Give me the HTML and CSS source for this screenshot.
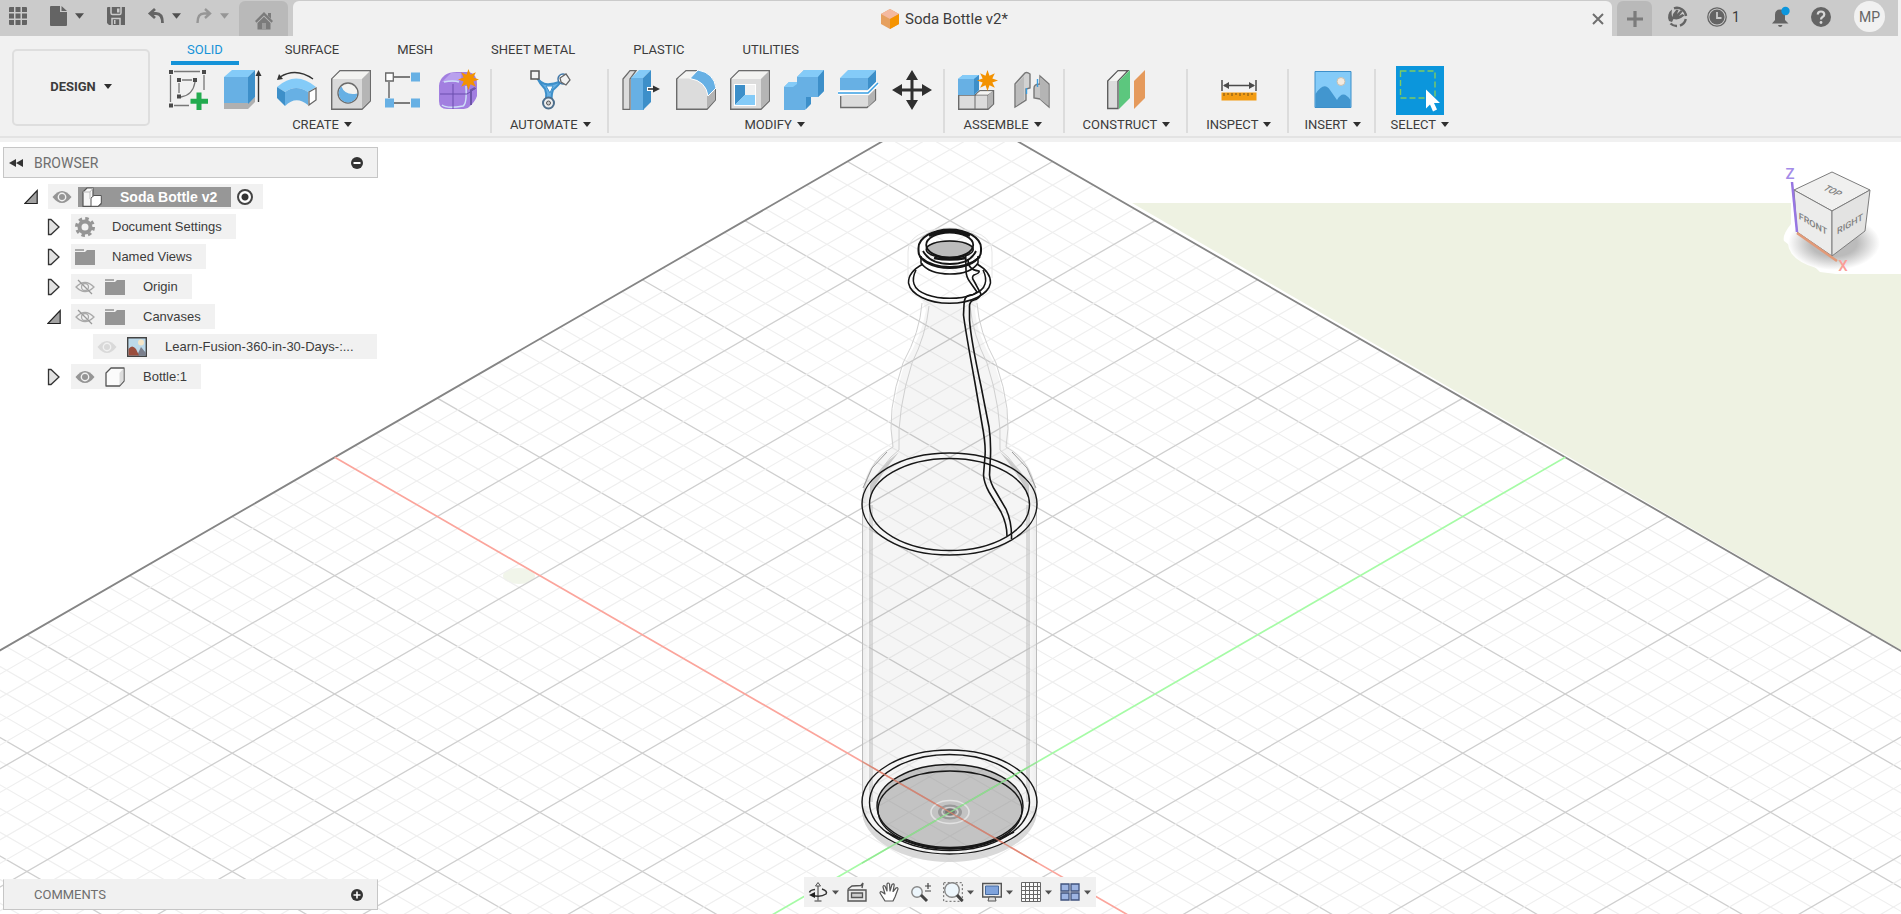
FILE: index.html
```html
<!DOCTYPE html>
<html lang="en">
<head>
<meta charset="utf-8">
<title>Soda Bottle v2*</title>
<link rel="stylesheet" href="styles.css">
</head>
<body>
<svg class="defs" aria-hidden="true">
  <defs>
    <symbol id="caret" viewBox="0 0 10 8"><path d="M0 1H10L5 7Z" fill="currentColor"/></symbol>
    <symbol id="star" viewBox="-10 -10 20 20"><path d="M10 0L4.6 1.9L7 7L1.9 4.6L0 10L-1.9 4.6L-7 7L-4.6 1.9L-10 0L-4.6-1.9L-7-7L-1.9-4.6L0-10L1.9-4.6L7-7L4.6-1.9Z" fill="#f39200"/></symbol>
    <symbol id="eye" viewBox="0 0 20 20"><path d="M.5 10Q10-2 19.500 10Q10 22 .5 10Z" fill="currentColor"/><circle cx="10" cy="10" r="3.700" fill="none" stroke="#f1f1f1" stroke-width="1.400"/></symbol>
    <symbol id="eye-off" viewBox="0 0 20 20"><path d="M1 10Q10 1 19 10Q10 19 1 10Z" fill="none" stroke="#aaa" stroke-width="1.3"/><circle cx="10" cy="10" r="3.5" fill="none" stroke="#aaa" stroke-width="1.3"/><path d="M3 3L17 17" stroke="#999" stroke-width="1.3"/></symbol>
    <symbol id="folder" viewBox="0 0 20 20"><path d="M0 2H9V4H0Z" fill="#aaa"/><path d="M0 5H10L12 3H20V18H0Z" fill="#959595"/></symbol>
    <symbol id="closed" viewBox="0 0 14 18"><path d="M1.5 1.5H4L12 9L4 16.5H1.5Z" fill="#e2e2e2" stroke="#333" stroke-width="1.3"/></symbol>
    <symbol id="open" viewBox="0 0 14 18"><path d="M.8 15.5H13.2V2.5Z" fill="#a2a2a2" stroke="#222" stroke-width="1.2"/></symbol>
    <linearGradient id="sheen" x1="0" x2="1"><stop offset="0" stop-color="#000" stop-opacity=".13"/><stop offset=".05" stop-color="#000" stop-opacity=".04"/><stop offset=".95" stop-color="#000" stop-opacity=".04"/><stop offset="1" stop-color="#000" stop-opacity=".13"/></linearGradient>
    <radialGradient id="soft"><stop offset=".5" stop-color="#bbb"/><stop offset="1" stop-color="#fff"/></radialGradient>
  </defs>
</svg>

<div class="app">
  <header class="titlebar">
    <div class="quick">
      <button class="tool" aria-label="Data panel"><svg width="18" height="18" viewBox="0 0 18 18" fill="#646464"><path d="M0 1Q0 0 1 0H5V5H0ZM6.500 0H11.500V5H6.500ZM13 0H17Q18 0 18 1V5H13ZM0 6.500H5V11.500H0ZM6.500 6.500H11.500V11.500H6.500ZM13 6.500H18V11.500H13ZM0 13H5V18H1Q0 18 0 17ZM6.500 13H11.500V18H6.500ZM13 13H18V17Q18 18 17 18H13Z"/></svg></button>
      <button class="tool tool-menu" aria-label="File"><svg width="17" height="20" viewBox="0 0 17 20" fill="#646464"><path d="M0 1Q0 0 1 0H10V6H17V19Q17 20 16 20H1Q0 20 0 19ZM11.500 0L17 5H11.500Z"/></svg><svg class="caret"><use href="#caret"/></svg></button>
      <button class="tool" aria-label="Save"><svg width="18" height="18" viewBox="0 0 18 18"><path d="M0 1Q0 0 1 0H18V18H2L0 16Z" fill="#646464"/><path d="M4 0V6Q4 7.500 5.500 7.500H12.500Q14 7.500 14 6V0M5 18V11.500H13V18" fill="none" stroke="#cbcbcb" stroke-width="1.500"/><path d="M10 1.500H12.500V5.500H10ZM7 13H8.500V17H7Z" fill="#cbcbcb"/></svg></button>
      <button class="tool tool-menu" aria-label="Undo"><svg width="16" height="16" viewBox="0 0 16 16" fill="none" stroke="#646464" stroke-width="2.800"><path d="M7 1L2 5.500L7 10M2.500 5.500H8Q14.500 5.500 14.500 15"/></svg><svg class="caret"><use href="#caret"/></svg></button>
      <button class="tool tool-menu faded" aria-label="Redo"><svg width="16" height="16" viewBox="0 0 16 16" fill="none" stroke="#969696" stroke-width="2.400"><path d="M9 1L14 5.500L9 10M13.500 5.500H8Q1.500 5.500 1.500 15"/></svg><svg class="caret"><use href="#caret"/></svg></button>
    </div>
    <button class="home-tab" aria-label="Home"><svg width="20" height="18" viewBox="0 0 20 18"><path d="M10 0L19 9L17.500 10.800L10 3.500L2.500 10.800L1 9Z M14 1H17V6.500L14 3.800Z M3.500 11L10 4.700L16.500 11V17.500H3.500Z" fill="#7b7b7b"/><path d="M8 11H12V17.500H8Z" fill="#9c9c9c"/></svg></button>
    <div class="doc-tab">
      <h1 class="doc-title"><svg width="18" height="20" viewBox="0 0 18 20"><path d="M9 0L18 5V15L9 20L0 15V5Z" fill="#e6a05f"/><path d="M9 0L18 5L9 10L0 5Z" fill="#f4b9a0"/><path d="M9 10L18 5V15L9 20Z" fill="#f59300"/></svg>Soda Bottle v2*</h1>
      <button class="close" aria-label="Close"><svg width="12" height="12" viewBox="0 0 12 12"><path d="M1 1L11 11M11 1L1 11" stroke="#6f6f6f" stroke-width="2"/></svg></button>
    </div>
    <button class="new-tab" aria-label="New design"><svg width="16" height="16" viewBox="0 0 16 16"><path d="M8 0V16M0 8H16" stroke="#7b7b7b" stroke-width="3.200"/></svg></button>
    <div class="account">
      <button class="tool" aria-label="Extensions"><svg width="20" height="20" viewBox="0 0 20 20"><path d="M5 2.500A9 9 0 0 0 2 14L5 15L6.500 12A9 9 0 0 0 14 11L17.500 8.500L15.500 7L12 9L15.500 4.500L14 3L10 7L11.500 3L9.500 2.500L6 7L5.500 10Q4 8 5 2.500Z" fill="#646464"/><path d="M7 1.300A9.200 9.200 0 0 1 19 9M18.800 12A9.200 9.200 0 0 1 13 18.600M10 19A9.200 9.200 0 0 1 3.500 16.500" fill="none" stroke="#646464" stroke-width="2.400"/></svg></button>
      <button class="tool jobs" aria-label="Job status, 1"><svg width="20" height="20" viewBox="0 0 20 20"><circle cx="10" cy="10" r="9.200" fill="none" stroke="#646464" stroke-width="1.300"/><circle cx="10" cy="10" r="7.600" fill="#646464"/><path d="M10 5V11H14.500" fill="none" stroke="#cbcbcb" stroke-width="1.800"/></svg><span>1</span></button>
      <button class="tool" aria-label="Notifications"><svg width="20" height="22" viewBox="0 0 20 22"><path d="M1 17.500L4 14V9Q4 3.500 9 3.500Q14 3.500 14 9V14L17.500 17.500ZM7 19H11.500Q11 21 9.200 21Q7.500 21 7 19Z" fill="#646464"/><circle cx="14.500" cy="5" r="4.200" fill="#0c96dd"/></svg></button>
      <button class="tool" aria-label="Help"><svg width="20" height="20" viewBox="0 0 20 20"><circle cx="10" cy="10" r="10" fill="#646464"/><path d="M6.800 7.500Q6.800 4.500 10 4.500T13.300 7.500Q13.300 9 11.500 10Q10 10.800 10 12.500" fill="none" stroke="#d8d8d8" stroke-width="2.200"/><circle cx="10" cy="15.500" r="1.400" fill="#d8d8d8"/></svg></button>
      <button class="avatar">MP</button>
    </div>
  </header>

  <section class="ribbon">
    <button class="workspace">DESIGN<svg class="caret small"><use href="#caret"/></svg></button>
    <div class="ribbon-main">
      <nav class="tabs">
        <a class="tab active" href="#solid">SOLID</a>
        <a class="tab" href="#surface">SURFACE</a>
        <a class="tab" href="#mesh">MESH</a>
        <a class="tab" href="#sheet">SHEET METAL</a>
        <a class="tab" href="#plastic">PLASTIC</a>
        <a class="tab" href="#utilities">UTILITIES</a>
      </nav>
      <div class="groups">
        <div class="group multi">
          <div class="icons">
            <button aria-label="Create sketch"><svg viewBox="0 0 40 40"><path d="M5 1.500H31M1.500 5V32M5 35.500H20M35 5V20M13 10H23M10 13V23M26 12Q24 25 12 27" fill="none" stroke="#777" stroke-width="1.300"/><path d="M0 0H4V4H0ZM33 0H37V4H33ZM0 33.500H4V37.500H0ZM8 8H12V12H8ZM24 8H28V12H24ZM8 24.500H12V28.500H8Z" fill="#4a4a4a"/><path d="M30 22.500V40M21.500 31.200H39" stroke="#22ab4f" stroke-width="5"/></svg></button>
            <button aria-label="Extrude"><svg viewBox="0 0 40 40"><path d="M1 33H25L32 27V32L25 39H1Z" fill="#b0b0b0"/><path d="M1 7H25V33H1Z" fill="#67b0e4"/><path d="M1 7L9 0H32L25 7Z" fill="#84cbf8"/><path d="M25 7L32 0V27L25 34Z" fill="#3d8fc9"/><path d="M35.500 4V32" stroke="#333" stroke-width="1.400"/><path d="M32.500 6L35.500 0L38.500 6Z" fill="#333"/></svg></button>
            <button aria-label="Revolve"><svg viewBox="0 0 40 40"><path d="M36 9Q19-3 3 7" fill="none" stroke="#333" stroke-width="1.400"/><path d="M0 10L2 4L6 9Z" fill="#333"/><path d="M0 17Q19 0 39 17L31 22Q19 14 8 22Z" fill="#84cbf8"/><path d="M8 22Q19 14 31 22V35Q19 25 8 36Z" fill="#67b0e4"/><path d="M0 17L8 22V36L0 28Z" fill="#3d8fc9"/><path d="M32 22L39 18V30L32 35Z" fill="#fff" stroke="#666" stroke-width="1.300"/></svg></button>
            <button aria-label="Hole"><svg viewBox="0 0 40 40"><path d="M.7 9L9 .7H39.300V31L31 39.300H.7Z" fill="#d9d9d9" stroke="#6b6b6b" stroke-width="1.400"/><path d="M1.400 9L9 1.400H38.600L31 9Z" fill="#f3f3f1"/><path d="M31 9L38.600 1.400V31L31 38.600Z" fill="#b5b5b5"/><circle cx="17" cy="23" r="10" fill="#f2f2f0" stroke="#6b6b6b" stroke-width="1.400"/><path d="M10.500 16.500Q14 26 26.300 23.500A9.300 9.300 0 1 1 10.500 16.500Z" fill="#67b0e4"/></svg></button>
            <button aria-label="Pattern"><svg viewBox="0 0 40 40"><path d="M9 7H25M4 12V28M9 33H25" stroke="#555" stroke-width="1.300"/><path d="M.7 3H8.300V11H.7Z" fill="#fff" stroke="#666" stroke-width="1.300"/><path d="M26 2.500H35V11.500H26ZM0 28.500H9V37.500H0ZM26 28.500H35V37.500H26Z" fill="#67b0e4"/></svg></button>
            <button aria-label="Create form"><svg viewBox="0 0 40 40"><path d="M0 16Q0 10 6 5Q10 2 18 2H30Q38 4 38 14V26Q36 32 30 37Q28 39 22 39H8Q0 39 0 31Z" fill="#a27fe0"/><path d="M3 12Q8 7 12 3H22Q24 8 19 12Z" fill="#b9a0ee"/><path d="M3 35Q8 39 24 36Q28 34 27 16M5 12Q14 10 20 12" fill="none" stroke="#cfe0f8" stroke-width="1.500"/><path d="M1 24H28L37 18M14 14V39" stroke="#6a4fae" stroke-width="1" fill="none"/><path d="M32 35V20L36 18" fill="none" stroke="#6d55a8" stroke-width="2"/><use href="#star" x="19" y="-1" width="21" height="21"/></svg></button>
          </div>
          <button class="menu">CREATE<svg class="caret small"><use href="#caret"/></svg></button>
        </div>
        <div class="group wide">
          <div class="icons">
            <button aria-label="Automated modeling"><svg viewBox="0 0 40 40"><path d="M6 6Q12 16 20 14Q28 14 34 8Q28 16 23 20Q21 26 22 30H16Q17 24 15 19Q10 14 6 6Z" fill="#67b0e4" stroke="#3d8fc9" stroke-width="2"/><path d="M16 16H23L20 23Z" fill="#fff" stroke="#3d8fc9"/><path d="M1 1H9V9H1Z" fill="#f2f2f2" stroke="#555" stroke-width="1.500"/><circle cx="33" cy="9" r="5" fill="#fff" stroke="#4278a8" stroke-width="1.500"/><path d="M30 8L36 4L40 10L36 15L31 12Z" fill="#f2f2f2" stroke="#666" stroke-width="1.300"/><circle cx="18.500" cy="33" r="5.500" fill="#eee" stroke="#4e6f8c" stroke-width="2"/><circle cx="18.500" cy="33" r="2" fill="#ccc" stroke="#555"/></svg></button>
          </div>
          <button class="menu">AUTOMATE<svg class="caret small"><use href="#caret"/></svg></button>
        </div>
        <div class="group multi">
          <div class="icons">
            <button aria-label="Press pull"><svg viewBox="0 0 40 40"><path d="M8 39.300H1V9L8 .7H14L8 9Z" fill="#dcdcdc" stroke="#6b6b6b" stroke-width="1.300"/><path d="M9 8H22V40H9Z" fill="#67b0e4"/><path d="M9 8L17 0H29L21 8Z" fill="#84cbf8"/><path d="M21 8L29 0V32L21 40Z" fill="#3d8fc9"/><path d="M25 19H33" stroke="#fff" stroke-width="4"/><path d="M26 19H33" stroke="#333" stroke-width="1.600"/><path d="M31 15.500L38 19L31 22.500Z" fill="#333"/></svg></button>
            <button aria-label="Fillet"><svg viewBox="0 0 40 40"><path d="M.7 9L10 .7H20Q39 4 39.300 20V30L31 39.300H.7Z" fill="#dcdcdc" stroke="#6b6b6b" stroke-width="1.400"/><path d="M2 8.500L10 1.500H21L14 8.500Z" fill="#f4f4f2"/><path d="M31 26L39 20V30L31 38.500Z" fill="#b3b3b3"/><path d="M14 8.500L22 0Q38 3 40 18L32 26Q30 11 14 8.500Z" fill="#67b0e4" stroke="#fff"/></svg></button>
            <button aria-label="Shell"><svg viewBox="0 0 40 40"><path d="M.7 9L9 .7H39.300V31L31 39.300H.7Z" fill="#dcdcdc" stroke="#6b6b6b" stroke-width="1.400"/><path d="M1.400 9L9 1.400H38.600L31 9Z" fill="#f3f3f1"/><path d="M31 9L38.600 1.400V31L31 38.600Z" fill="#b5b5b5"/><path d="M4 14H26V36H4Z" fill="#fff"/><path d="M5 15H15V25L5 35Z" fill="#3d8fc9"/><path d="M5 35L15 25H25V35Z" fill="#84cbf8"/><path d="M15 15H25V25H15Z" fill="#f1f1f1"/></svg></button>
            <button aria-label="Combine"><svg viewBox="0 0 40 40"><path d="M0 17L5 12H13V7L20 0H40V21L34 27H27V33L21 40H0Z" fill="#67b0e4"/><path d="M13 7L20 0H40L34 7ZM0 17L5 12H13V14L9 17Z" fill="#84cbf8"/><path d="M34 7L40 0V21L34 27ZM22 27H27V34L22 39Z" fill="#3d8fc9"/></svg></button>
            <button aria-label="Split body"><svg viewBox="0 0 40 40"><path d="M2.700 26V37.500H29L37.500 30V19" fill="#dcdcdc" stroke="#6b6b6b" stroke-width="1.300"/><path d="M30 26L37 19V30L30 37Z" fill="#b3b3b3"/><path d="M2 8H30V20H2Z" fill="#67b0e4"/><path d="M2 8L10 0H38L30 8Z" fill="#84cbf8"/><path d="M30 8L38 0V12L30 20Z" fill="#3d8fc9"/><path d="M0 23H30L40 13" fill="none" stroke="#fff" stroke-width="4"/><path d="M0 23H30L40 13" fill="none" stroke="#3aa0e4" stroke-width="1.500"/></svg></button>
            <button aria-label="Move"><svg viewBox="0 0 40 40"><path d="M20 6V34M6 20H34" stroke="#2f2f2f" stroke-width="3"/><path d="M14 10L20 0L26 10ZM14 30L20 40L26 30ZM10 14L0 20L10 26ZM30 14L40 20L30 26Z" fill="#2f2f2f"/></svg></button>
          </div>
          <button class="menu">MODIFY<svg class="caret small"><use href="#caret"/></svg></button>
        </div>
        <div class="group multi">
          <div class="icons">
            <button aria-label="New component"><svg viewBox="0 0 40 40"><path d="M.7 25H17L22 20.700H35.500V34L30 39.300H.7Z" fill="#dcdcdc" stroke="#6b6b6b" stroke-width="1.400"/><path d="M17 25V39M17 25H30L35 21M30 25V39" fill="none" stroke="#6b6b6b"/><path d="M18 24.500L22 21.300H34.500L30 24.500Z" fill="#f4f4f2"/><path d="M30 25L35 21V34L30 38.500Z" fill="#b3b3b3"/><path d="M0 9L5 5H21V20L16 25H0Z" fill="#67b0e4"/><path d="M0 9L5 5H21L16 9Z" fill="#84cbf8"/><path d="M16 9L21 5V20L16 25Z" fill="#3d8fc9"/><use href="#star" x="19" y="0" width="21" height="21"/></svg></button>
            <button aria-label="Joint"><svg viewBox="0 0 40 40"><path d="M3 14L12 4Q14 1 18 4V18L14 19V30L3 37Z" fill="#d2d2d2" stroke="#777" stroke-width="1.400"/><path d="M12 6V30L4 36V15Z" fill="#bcbcbc"/><path d="M37 14L28 6V14Q22 14 22 18V28L28 29L37 37Z" fill="#c6c6c6" stroke="#777" stroke-width="1.400"/><path d="M28 7L36.500 15V36L28 29Z" fill="#b4b4b4"/><path d="M14.500 18V24M25.500 9V17" stroke="#3a9de0" stroke-width="1.400"/></svg></button>
          </div>
          <button class="menu">ASSEMBLE<svg class="caret small"><use href="#caret"/></svg></button>
        </div>
        <div class="group wide">
          <div class="icons">
            <button aria-label="Offset plane"><svg viewBox="0 0 40 40"><path d="M1.700 11L12 .7H22L12 11V38.500H1.700Z" fill="#dcdcdc" stroke="#5f5f5f" stroke-width="1.400"/><path d="M3 11L12 1.500H20L11 11Z" fill="#f4f4f2"/><path d="M13 11L24 0V28L13 39Z" fill="#5cc77e"/><path d="M28 11L39 0V28L28 39Z" fill="#e59a5c"/></svg></button>
          </div>
          <button class="menu">CONSTRUCT<svg class="caret small"><use href="#caret"/></svg></button>
        </div>
        <div class="group wide">
          <div class="icons">
            <button aria-label="Measure"><svg viewBox="0 0 40 40"><path d="M3 10V21M37 10V21M5 15.500H35" stroke="#4a4a4a" stroke-width="1.500"/><path d="M4 15.500L10 12V19ZM36 15.500L30 12V19Z" fill="#4a4a4a"/><path d="M2.500 22.500H37.500V30.500H2.500Z" fill="#f39c12"/><path d="M5 23V26M9 23V25M13 23V26M17 23V25M21 23V26M25 23V25M29 23V26M33 23V25" stroke="#70501a"/></svg></button>
          </div>
          <button class="menu">INSPECT<svg class="caret small"><use href="#caret"/></svg></button>
        </div>
        <div class="group">
          <div class="icons">
            <button aria-label="Insert canvas"><svg viewBox="0 0 40 40"><path d="M2 1.500H38V37.500H2Z" fill="#84cbf8" stroke="#3d8fc9"/><path d="M2.500 24Q11 11 17 20L24 30Q30 19 37.500 30V37H2.500Z" fill="#4296cf"/><circle cx="28" cy="11.500" r="4" fill="#f3eadf" stroke="#c9bfae"/></svg></button>
          </div>
          <button class="menu">INSERT<svg class="caret small"><use href="#caret"/></svg></button>
        </div>
        <div class="group last">
          <div class="icons">
            <button class="selected" aria-label="Select"><svg viewBox="0 0 48 48"><path d="M4.500 4.500H39V31.500H4.500Z" fill="none" stroke="#7ecb62" stroke-width="1.400" stroke-dasharray="6 3"/><path d="M30 23V42L34 38L37 45L41 43L38 36.500H44Z" fill="#fff"/></svg></button>
          </div>
          <button class="menu">SELECT<svg class="caret small"><use href="#caret"/></svg></button>
        </div>
      </div>
    </div>
  </section>

  <main class="viewport">
    <svg class="scene" viewBox="0 142 1901 772" preserveAspectRatio="xMidYMid slice" role="img" aria-label="Soda bottle model on the ground grid">
      <defs>
        <path id="line" d="M950 102.300L2180.600 812.300"/>
        <g id="four"><use href="#line" x="-20.510" y="11.834"/><use href="#line" x="-41.020" y="23.668"/><use href="#line" x="-61.530" y="35.502"/><use href="#line" x="-82.040" y="47.336"/></g>
        <g id="family">
          <g stroke="#efefef" stroke-width="1.200"><use href="#four"/><use href="#four" x="-102.550" y="59.170"/><use href="#four" x="-205.100" y="118.340"/><use href="#four" x="-307.650" y="177.510"/><use href="#four" x="-410.200" y="236.680"/><use href="#four" x="-512.750" y="295.850"/><use href="#four" x="-615.300" y="355.020"/><use href="#four" x="-717.850" y="414.190"/><use href="#four" x="-820.400" y="473.360"/><use href="#four" x="-922.950" y="532.530"/><use href="#four" x="-1025.500" y="591.700"/><use href="#four" x="-1128.050" y="650.870"/></g>
          <g stroke="#cfcfcf" stroke-width="1.300"><use href="#line" x="-102.550" y="59.170"/><use href="#line" x="-205.100" y="118.340"/><use href="#line" x="-307.650" y="177.510"/><use href="#line" x="-410.200" y="236.680"/><use href="#line" x="-512.750" y="295.850"/><use href="#line" x="-717.850" y="414.190"/><use href="#line" x="-820.400" y="473.360"/><use href="#line" x="-922.950" y="532.530"/><use href="#line" x="-1025.500" y="591.700"/><use href="#line" x="-1128.050" y="650.870"/></g>
        </g>
        <clipPath id="body"><path d="M862 503V810A87.500 52 0 0 0 1037 810V503Z"/></clipPath>
      </defs>
      <path d="M1132 203H1901V650Z" fill="#eef2e2"/>
      <ellipse cx="519" cy="576" rx="16" ry="8" fill="#f1f5ea"/>
      <use href="#family"/>
      <use href="#family" transform="matrix(-1 0 0 1 1900 0)"/>
      <path d="M-280.600 812.300L950 102.300L2180.600 812.300" fill="none" stroke="#858585" stroke-width="1.800"/>
      <path d="M1565.300 457.300L334.700 1167.300" stroke="#a6fba6" stroke-width="1.700"/>
      <path d="M334.700 457.300L1565.300 1167.300" stroke="#fba59c" stroke-width="1.700"/>

      <path d="M922 300L926 310Q922 335 905 363Q888 415 892 447Q863 462 862 503V810A87.500 52 0 0 0 1037 810V503Q1036 462 1008 447Q1012 415 994 363Q977 335 975 310L978 300Z" fill="url(#sheen)"/>
      <g clip-path="url(#body)"><path d="M862 803A87.500 52 0 0 0 1037 803V870H862Z" fill="#d2d2d2" opacity=".8"/><path d="M866 500V806M1033 500V806" stroke="#fff" stroke-width="6" opacity=".45"/></g>
      <g fill="none" stroke="#bcbcbc">
        <path d="M862.500 503V803M870 505V802M872 505V802M1029 505V802M1027 505V802M1036.500 503V803"/>
        <path d="M922 303Q920 332 903 363Q886 412 893 447Q865 462 862.500 503M977 303Q979 332 996 363Q1013 412 1006 447Q1035 462 1036.500 503M929 306Q926 335 912 363Q897 410 899 450Q882 462 872 490M970 306Q973 335 987 363Q1002 410 1000 450Q1017 462 1027 490" stroke="#d0d0d0"/>
        <path d="M887 452L872 468L863 488M1012 452L1027 468L1036 488" stroke="#9a9a9a"/>
        <path d="M908 252Q908 230 949 228Q992 230 992 252V278M908 252V278" stroke="#e6e6e6"/>
      </g>
      <path d="M870 485Q878 468 899 452Q880 475 870 495ZM1029 485Q1021 468 1000 452Q1019 475 1029 495Z" fill="#c9c9c9"/>

      <g fill="none" stroke="#171717" stroke-width="1.400">
        <ellipse cx="949.500" cy="504" rx="87.500" ry="51"/>
        <ellipse cx="949.500" cy="504.500" rx="80" ry="46"/>
        <ellipse cx="950" cy="806" rx="73" ry="41.500" fill="#888" fill-opacity=".45" stroke="none"/>
        <ellipse cx="949.500" cy="802" rx="87.500" ry="52"/>
        <ellipse cx="949.500" cy="802.500" rx="80" ry="48"/>
        <ellipse cx="950" cy="806" rx="73" ry="41.500"/>
        <ellipse cx="950" cy="810" rx="72" ry="39"/>
        <path d="M886 832Q949 865 1014 832" stroke-width="1.800"/>
      </g>
      <ellipse cx="950" cy="812" rx="19" ry="11.500" fill="none" stroke="#e2e2e2" stroke-width="1.600"/>
      <ellipse cx="950" cy="812" rx="12" ry="7.500" fill="#9a9a9a"/>
      <ellipse cx="950" cy="812" rx="8" ry="4.500" fill="none" stroke="#d0d0d0" stroke-width="1.600"/>
      <ellipse cx="950" cy="812" rx="5" ry="3.500" fill="#777"/>
      <path d="M862 863.100L1037 762.100" stroke="#8fe58f" stroke-width="1.400" opacity=".8"/>
      <path d="M862 761.500L1037 862.500" stroke="#d9826c" stroke-width="1.400" opacity=".8"/>

      <g fill="none" stroke="#151515" stroke-width="1.500">
        <ellipse cx="950" cy="249" rx="24" ry="9" fill="#bcbcbc" stroke="none"/>
        <path d="M918.500 248A31.200 18.500 0 0 1 981 248V251A31.200 17 0 0 1 918.500 251Z" stroke-width="2"/>
        <ellipse cx="949.700" cy="245" rx="23.500" ry="12.500" stroke-width="1.800"/>
        <ellipse cx="949.700" cy="249.500" rx="23.500" ry="8.500"/>
        <path d="M929 235.500Q950 227 970 235.500" stroke-width="3"/>
        <path d="M923 251Q930 264 950 264T976 251M920 257Q932 267 950 267T980 257" stroke-width="1.800"/>
        <path d="M934 258Q950 261 966 258" stroke-width="2.500"/>
        <path d="M921 256V263Q929 274 950 274T978 263V256"/>
        <path d="M923 264Q908 272 908.500 283A41.200 22.500 0 0 0 990.500 283Q991 272 977 264"/>
        <path d="M916 270Q912 278 914 284C920 303 980 303 985 284Q987 278 983 270"/>
        <path d="M965.700 256L966 270Q966 277 970 282L977 292Q974 295 970 295Q964 296 964 305L963.500 315Q965 328 975 383L982 424Q986 445 985 456L983.500 475Q984 483 989 492L1001 512Q1007 524 1007 536" stroke-width="1.600"/>
        <path d="M968 260Q968 270 979 271Q980 273 974 275Q971 277 974 281L981 294Q979 299 974 300Q969 301 969.500 308V320Q971 340 981 386L989 427Q991 440 990.500 456L989.500 475Q990 483 996 492L1006 509Q1012 522 1011.500 539" stroke-width="1.600"/>
      </g>

      <path d="M1791 202H1901V274H1836L1820 272L1802 255L1784 241Q1782 235 1791 224Z" fill="#fff"/>
      <ellipse cx="1834" cy="243" rx="46" ry="27" fill="url(#soft)"/>
      <g stroke="#7d7d7d" stroke-linejoin="round">
        <path d="M1832 172L1870 190L1832 211L1794 190Z" fill="#f0f0ef"/>
        <path d="M1794 190L1832 211V256L1797 232Z" fill="#ececeb"/>
        <path d="M1832 211L1870 190L1865 231L1832 256Z" fill="#e3e3e2"/>
      </g>
      <path d="M1792 182L1797 232" stroke="#9776e2" stroke-width="2.500"/>
      <path d="M1797 233L1837 261" stroke="#e29a78" stroke-width="2.500"/>
      <g class="cube-text" text-anchor="middle">
        <text class="face" transform="translate(1813 227) skewY(30)">FRONT</text>
        <text class="face" transform="translate(1850 227) skewY(-30)">RIGHT</text>
        <text class="face" transform="translate(1830 193) rotate(26) skewX(-28)">TOP</text>
        <text class="axis" x="1790" y="179" fill="#a48be8">Z</text>
        <text class="axis" x="1843" y="271" fill="#fb9d97">X</text>
      </g>
    </svg>

    <aside class="browser">
      <div class="panel-head"><svg width="14" height="8" viewBox="0 0 14 8"><path d="M7 0V8L0 4ZM14 0V8L7 4Z" fill="#333"/></svg><h2>BROWSER</h2><button aria-label="Collapse browser"><svg width="12" height="12" viewBox="0 0 12 12"><circle cx="6" cy="6" r="6" fill="#333"/><path d="M2.500 6H9.500" stroke="#fff" stroke-width="2"/></svg></button></div>
      <ul class="tree">
        <li class="level0"><button class="twist" aria-label="Collapse"><svg><use href="#open"/></svg></button>
          <div class="node root"><svg class="dim"><use href="#eye"/></svg><span class="picked"><svg viewBox="0 0 20 20"><path d="M1 5L5 1H11V9H15L19 11V17L16 19.300H1Z" fill="#f6f6f6" stroke="#555" stroke-width="1.200"/><path d="M9 11L12 8.500H19.300V16L16 19.300H9Z" fill="#fff" stroke="#555"/><path d="M1 5H8V12M8 5L11 1" fill="none" stroke="#bbb"/></svg><b>Soda Bottle v2</b></span><input type="radio" checked aria-label="Activate Soda Bottle v2"></div></li>
        <li class="level1"><button class="twist" aria-label="Expand"><svg><use href="#closed"/></svg></button>
          <div class="node"><svg viewBox="0 0 20 20"><circle cx="10" cy="10" r="8.500" fill="none" stroke="#959595" stroke-width="3" stroke-dasharray="3.500 3.175"/><circle cx="10" cy="10" r="5.500" fill="none" stroke="#959595" stroke-width="4"/></svg><span class="name">Document Settings</span></div></li>
        <li class="level1"><button class="twist" aria-label="Expand"><svg><use href="#closed"/></svg></button>
          <div class="node"><svg><use href="#folder"/></svg><span class="name">Named Views</span></div></li>
        <li class="level1"><button class="twist" aria-label="Expand"><svg><use href="#closed"/></svg></button>
          <div class="node"><svg><use href="#eye-off"/></svg><svg><use href="#folder"/></svg><span class="name">Origin</span></div></li>
        <li class="level1"><button class="twist" aria-label="Collapse"><svg><use href="#open"/></svg></button>
          <div class="node"><svg><use href="#eye-off"/></svg><svg><use href="#folder"/></svg><span class="name">Canvases</span></div></li>
        <li class="level2">
          <div class="node"><svg class="pale"><use href="#eye"/></svg><svg viewBox="0 0 20 20"><path d="M.7.7H19.300V19.300H.7Z" fill="#bcd9ea" stroke="#444" stroke-width="1.400"/><circle cx="14" cy="5.500" r="3" fill="#f5e6c8"/><path d="M10 18.500L14 10L19 16V18.500Z" fill="#7b7f8c"/><path d="M1.500 12Q5 7 9 12L12 18.500H1.500Z" fill="#9a4e3e"/></svg><span class="name">Learn-Fusion-360-in-30-Days-:...</span></div></li>
        <li class="level1"><button class="twist" aria-label="Expand"><svg><use href="#closed"/></svg></button>
          <div class="node"><svg class="dim"><use href="#eye"/></svg><svg viewBox="0 0 20 20"><path d="M1 6L6 1H19V14L14.500 19H1Z" fill="#fbfbfb" stroke="#555" stroke-width="1.300" stroke-linejoin="round"/><path d="M14.500 6L18.500 1.500V14L14.500 18.500Z" fill="#ddd"/></svg><span class="name">Bottle:1</span></div></li>
      </ul>
    </aside>

    <div class="bottom">
      <div class="comments"><h2>COMMENTS</h2><button aria-label="Add comment"><svg width="12" height="12" viewBox="0 0 12 12"><circle cx="6" cy="6" r="6" fill="#333"/><path d="M2.500 6H9.500M6 2.500V9.500" stroke="#fff" stroke-width="1.600"/></svg></button></div>
      <nav class="navbar" aria-label="Navigation">
        <button class="drop" aria-label="Orbit"><svg viewBox="0 0 20 20"><path d="M10 1V19M6.500 19H13.500" stroke="#777" stroke-width="1.500"/><path d="M7.500 4L10 .5L12.500 4Z" fill="#eee" stroke="#555"/><path d="M14 7Q20 9 18 12Q12 16 4 13M7 7.500Q2 8 1.500 10.500" fill="none" stroke="#333" stroke-width="1.500"/><path d="M1 13L7 10V16Z" fill="#222"/></svg><svg class="caret"><use href="#caret"/></svg></button>
        <button aria-label="Look at"><svg viewBox="0 0 20 20"><path d="M1 8H19V19H1Z" fill="#e8e8e8" stroke="#555" stroke-width="1.400"/><path d="M4.500 11H15.500V15.500H4.500Z" fill="#ccc" stroke="#555" stroke-width="1.300"/><path d="M1 7L5 4L14 3.500L16 1L15 6" fill="none" stroke="#555" stroke-width="1.400"/></svg></button>
        <button aria-label="Pan"><svg viewBox="0 0 20 20"><path d="M6 19L1 11Q1 9 3 10L6 12L4 5Q4 3 6 4L8 9L8 2Q9 0 10.500 2L11 9L13 2.500Q15 1 15.200 3L14 9.500L17 6Q19 5 19 7L16 15L14 19Z" fill="#fff" stroke="#555" stroke-width="1.200" stroke-linejoin="round"/></svg></button>
        <button aria-label="Zoom"><svg viewBox="0 0 20 20"><circle cx="6" cy="10" r="5.200" fill="#edf6fc" stroke="#888" stroke-width="1.400"/><path d="M10 13L16 19" stroke="#444" stroke-width="3"/><path d="M17 1V7M14 4H20M14 9H20" stroke="#444" stroke-width="1.200"/></svg></button>
        <button class="drop" aria-label="Fit"><svg viewBox="0 0 20 20"><path d="M.7.7H19.300V19.300H.7Z" fill="none" stroke="#666" stroke-dasharray="2 2"/><circle cx="9" cy="8" r="7.300" fill="#edf6fc" stroke="#888" stroke-width="1.400"/><path d="M14 13L19.500 19" stroke="#444" stroke-width="3.200"/></svg><svg class="caret"><use href="#caret"/></svg></button>
        <button class="drop" aria-label="Display settings"><svg viewBox="0 0 20 20"><path d="M.7 1.500H19.300V15H.7Z" fill="#eee" stroke="#555" stroke-width="1.400"/><path d="M3.500 4H16.500V12.500H3.500Z" fill="#7fa3dc" stroke="#476a9e"/><path d="M7 15H13L14 19H6Z" fill="#ddd" stroke="#555"/></svg><svg class="caret"><use href="#caret"/></svg></button>
        <button class="drop" aria-label="Grid and snaps"><svg viewBox="0 0 20 20"><path d="M.5.5H19.500V19.500H.5ZM4.500 0V20M8.500 0V20M12.500 0V20M16.500 0V20M0 4.500H20M0 8.500H20M0 12.500H20M0 16.500H20" fill="#fafafa" stroke="#666"/></svg><svg class="caret"><use href="#caret"/></svg></button>
        <button class="drop" aria-label="Viewports"><svg viewBox="0 0 20 20"><path d="M1 2H9V9H1ZM11 2H19V9H11ZM1 11H9V18H1ZM11 11H19V18H11Z" fill="#9db4e2" stroke="#40537d" stroke-width="1.300"/></svg><svg class="caret"><use href="#caret"/></svg></button>
      </nav>
    </div>
  </main>
</div>
</body>
</html>
```
FILE: styles.css
```css
* { box-sizing: border-box; }
body { margin: 0; font-family: Roboto, "Liberation Sans", sans-serif; font-size: 13px; color: #3c3c3c; }
button { font: inherit; color: inherit; background: none; border: 0; padding: 0; display: flex; align-items: center; }
svg { display: block; flex: none; overflow: visible; }
h1, h2 { margin: 0; font-weight: 400; }
ul { list-style: none; margin: 0; padding: 0; }
.defs { position: absolute; width: 0; height: 0; }
.caret { width: 9px; height: 8px; color: #505050; }
.caret.small { width: 8px; height: 7px; color: #2f2f2f; }

.app { display: flex; flex-direction: column; min-height: 100vh; background: #f1f1f1; }

.titlebar { display: flex; height: 36px; margin-right: 3px; padding-top: 1px; background: #cbcbcb; }
.quick { display: flex; align-items: center; width: 239px; padding: 0 0 6px 9px; gap: 23px; }
.tool-menu { gap: 8px; }
.faded .caret { color: #969696; }
.quick .tool-menu + .tool-menu { margin-left: -8px; }
.home-tab, .new-tab { justify-content: center; background: #b9b9b9; border-radius: 6px 6px 0 0; }
.home-tab { width: 49px; margin-right: 5px; padding-top: 4px; }
.new-tab { width: 35px; margin-left: 5px; }
.doc-tab { flex: 1; display: flex; align-items: center; padding: 0 8px 0 4px; background: #f1f1f1; border-radius: 6px 6px 0 0; }
.doc-title { flex: 1; display: flex; justify-content: center; align-items: center; gap: 6px; font-size: 15px; }
.account { display: flex; align-items: center; width: 246px; padding: 0 13px 4px 15px; }
.account .tool { margin-right: 20px; }
.account .jobs { gap: 5px; margin-right: 31px; font-size: 14px; }
.avatar { justify-content: center; width: 31px; height: 31px; margin-left: auto; border-radius: 50%; background: #f1f1f1; font-size: 14px; color: #666; }

.ribbon { display: flex; padding-left: 12px; border-bottom: 4px solid #f1f1f1; box-shadow: inset 0 -2px #e3e3e3; }
.workspace { justify-content: center; gap: 8px; width: 138px; height: 77px; margin: 13px 6px 12px 0; padding-bottom: 2px; border: 2px solid #dedede; border-radius: 5px; font-weight: 700; }
.ribbon-main { flex: 1; }
.tabs { display: flex; gap: 26px; height: 30px; padding-left: 15px; }
.tab { padding: 5px 16px 0; line-height: 18px; color: inherit; text-decoration: none; height: 29px; border-bottom: 4px solid transparent; }
.tab.active { margin-right: 4px; color: #1593d8; border-color: #1593d8; }
.groups { display: flex; }
.group { display: flex; flex-direction: column; align-items: center; height: 72px; padding: 0 15px; background: linear-gradient(#dcdcdc, #dcdcdc) no-repeat right 3px / 2px 64px; }
.group.multi { padding: 0 13px; }
.group.wide { padding: 0 18px; }
.group.last { background: none; }
.menu { gap: 5px; height: 19px; }
.multi .menu { margin-right: 4px; }
.icons { display: flex; align-items: center; gap: 14px; height: 49px; }
.icons svg { width: 40px; height: 42px; padding-bottom: 2px; }
.icons .selected { background: #0b96dc; }
.icons .selected svg { width: 48px; height: 49px; padding: 0; }

.viewport { flex: 1; position: relative; display: flex; flex-direction: column; justify-content: space-between; background: #fff; }
.scene { position: absolute; inset: 0; width: 100%; height: 100%; overflow: hidden; }
.cube-text { font-weight: 500; }
.face { font-size: 9px; fill: #808080; }
.axis { font-size: 15px; }

.browser { position: relative; width: 375px; margin: 5px 0 0 3px; }
.panel-head, .comments { display: flex; align-items: center; width: 375px; height: 31px; background: #f1f1f1; border: 1px solid #c6c6c6; color: #6e6e6e; }
.panel-head { padding: 0 14px 0 5px; gap: 11px; }
.panel-head h2 { flex: 1; font-size: 14px; }
.tree { display: flex; flex-direction: column; gap: 5px; margin-top: 6px; font: 13px "Liberation Sans", sans-serif; }
.tree li { display: flex; align-items: center; height: 25px; }
.tree svg { width: 20px; height: 20px; }
.tree .twist svg { width: 14px; height: 18px; }
.level0 { padding-left: 21px; }
.level0 .twist { margin-right: 10px; }
.level1 { padding-left: 44px; }
.level1 .twist { margin-right: 10px; }
.level2 { padding-left: 90px; }
.node { display: flex; align-items: center; height: 25px; padding: 0 14px 0 4px; gap: 10px; background: #f1f1f1; }
.level2 .node { min-width: 284px; }
.node .name { padding-left: 7px; white-space: nowrap; }
.node svg + svg + .name { padding-left: 8px; }
.node.root { gap: 6px; padding-right: 10px; }
.picked { display: flex; align-items: center; gap: 18px; width: 153px; height: 20px; padding-left: 4px; background: #979797; color: #fff; font-size: 14px; white-space: nowrap; }
.root input { appearance: none; width: 16px; height: 16px; margin: 0; border: 2px solid #444; border-radius: 50%; background: radial-gradient(circle, #333 3px, #fff 4px); }
.dim { color: #959595; }
.pale { color: #d9d9d9; }

.bottom { position: relative; display: grid; grid-template-columns: 1fr auto 1fr; align-items: start; height: 35px; margin-left: 3px; margin-right: 4px; }
.comments { justify-content: space-between; padding: 0 14px 0 30px; border-top-color: #f1f1f1; }
.comments h2 { font-size: 13px; }
.navbar { display: flex; align-items: center; gap: 12px; height: 30px; margin-top: -2px; padding: 0 5px 0 4px; background: #f1f1f1; }
.navbar button { gap: 4px; }
.navbar .drop:not(:last-child) { margin-right: -4px; }
.navbar svg { width: 20px; height: 20px; }
.navbar .caret { width: 7px; height: 7px; }
```
